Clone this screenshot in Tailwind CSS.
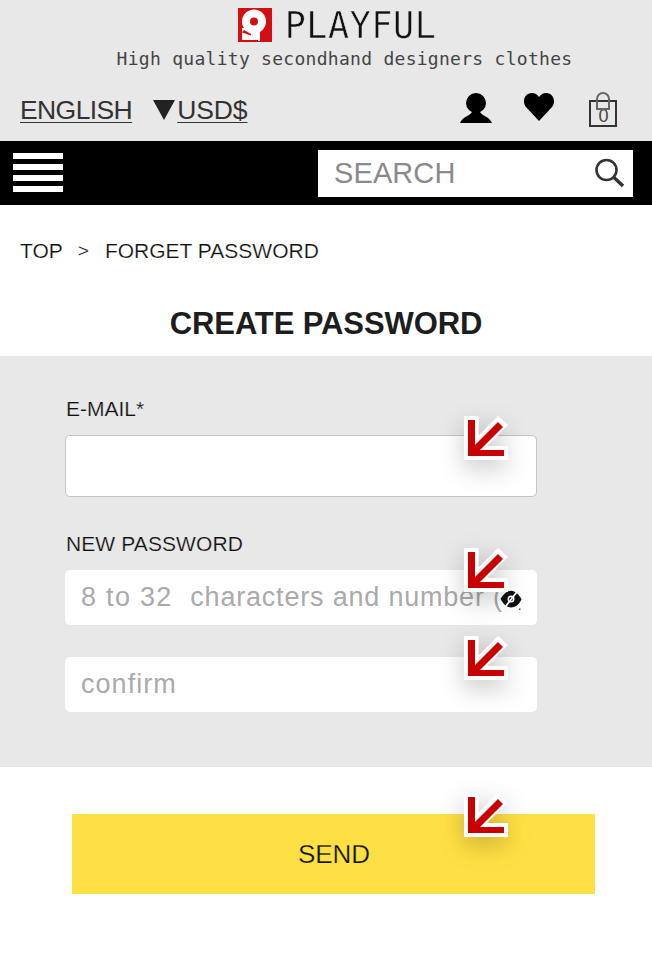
<!DOCTYPE html>
<html lang="en">
<head>
<meta charset="utf-8">
<title>Create password</title>
<script src="https://cdn.jsdelivr.net/npm/@tailwindcss/browser@4"></script>
</head>
<body class="bg-white font-['Liberation_Sans',sans-serif] text-[#222]">
<div class="relative h-[960px] w-[652px] overflow-hidden">
  <svg width="0" height="0" class="absolute">
    <defs>
      <g id="arrow">
        <path d="M0 0H14.5V19.5L34 0L44 9L23 30H44V44H0Z" fill="#fff"/>
        <path d="M4 4H11V29L34 6L39 11L16 34H40V40H4Z" fill="#c80000"/>
      </g>
    </defs>
  </svg>

  <header class="flex h-[141px] flex-col bg-[#e8e8e8]">
    <div class="flex h-[42px] items-center justify-center pt-[8px] pl-[22px]">
      <svg width="34" height="34" viewBox="0 0 34 34" class="shrink-0">
        <rect width="34" height="34" fill="#d40f14"/>
        <circle cx="16" cy="13.5" r="12" fill="#fff"/>
        <path d="M4 20H20V32H4Z" fill="#fff"/>
        <path d="M13 26.5L22 23V33H20V32H13Z" fill="#fff"/>
        <path d="M4 24.5L13 27.5V26L6 22Z" fill="#d40f14"/>
        <circle cx="16" cy="13.5" r="4" fill="#d40f14"/>
      </svg>
      <span class="ml-[13px] font-['DejaVu_Sans_Mono',monospace] text-[35px] leading-none tracking-[0.6px] text-[#111] [-webkit-text-stroke:0.5px_#e8e8e8] [transform:scaleY(1.06)]">PLAYFUL</span>
    </div>
    <p class="mt-[7px] h-[20px] pl-[37px] text-center font-['DejaVu_Sans_Mono',monospace] text-[18px] leading-[20px] tracking-[0.28px] whitespace-nowrap text-[#444]">High quality secondhand designers clothes</p>
    <div class="mt-[16px] flex h-[50px] items-center pl-5">
      <a class="text-[26.5px] leading-none tracking-[-0.6px] text-[#333] underline decoration-1 underline-offset-[3px]">ENGLISH</a>
      <span class="ml-[21px] h-0 w-0 border-x-[11px] border-t-[20px] border-x-transparent border-t-[#222]"></span>
      <a class="ml-[2px] text-[26.5px] leading-none tracking-[-0.1px] text-[#333] underline decoration-1 underline-offset-[3px]">USD$</a>
      <svg width="32" height="32" viewBox="0 0 32 32" class="-mt-[4px] ml-[213px]">
        <circle cx="16" cy="11" r="10"/>
        <path d="M0 31C3 24 10 24 12 20H20C22 24 29 24 32 31Z"/>
      </svg>
      <svg width="32" height="30" viewBox="0 0 32 30" class="-mt-[6px] ml-[31px]">
        <path d="M16 29L3 15C-1 10 1 2 8 1C11 .5 14 2 16 5C18 2 21 .5 24 1C31 2 33 10 29 15Z"/>
      </svg>
      <div class="relative -mt-[2px] ml-[34px] h-[35px] w-[28px]">
        <span class="absolute bottom-0 left-0 flex h-[27px] w-[28px] items-center justify-center border-2 border-[#333] pt-[5px] text-[18px] leading-none text-[#444]">0</span>
        <span class="absolute top-0 left-[7px] h-[18px] w-[14px] rounded-t-[7px] border-2 border-[#666]"></span>
      </div>
    </div>
  </header>

  <nav class="flex h-[64px] items-center justify-between bg-black pr-[19px] pl-[13px]">
    <div class="-mt-[1px] flex w-[50px] flex-col gap-[5.3px]">
      <span class="h-[6px] bg-white"></span>
      <span class="h-[6px] bg-white"></span>
      <span class="h-[6px] bg-white"></span>
      <span class="h-[6px] bg-white"></span>
    </div>
    <div class="flex h-[47px] w-[315px] items-center justify-between bg-white pr-[9px] pl-[16px]">
      <span class="text-[29px] leading-none tracking-[0.1px] text-[#8a8a8a]">SEARCH</span>
      <svg width="30" height="30" viewBox="0 0 30 30" fill="none" stroke="#333">
        <circle cx="12.5" cy="12" r="10" stroke-width="2.6"/>
        <path d="M20 19.5L29 28" stroke-width="3.4"/>
      </svg>
    </div>
  </nav>

  <div class="flex h-[92px] items-center pb-[2px] pl-5 text-[21px] leading-none text-[#111] [-webkit-text-stroke:0.2px_#fff]">
    <span>TOP</span>
    <span class="ml-[15px] text-[19px]">&gt;</span>
    <span class="ml-[16px]">FORGET PASSWORD</span>
  </div>
  <h1 class="flex h-[59px] items-start justify-center pt-[9px] text-[31px] leading-[36px] font-bold tracking-[-0.1px] text-[#1d1d1d]">CREATE PASSWORD</h1>

  <section class="h-[411px] bg-[#e8e8e8] pt-[40px] pl-[65px]">
    <label class="block h-[39px] pl-[1px] text-[21px] leading-[26px] text-[#111] [-webkit-text-stroke:0.2px_#e8e8e8]">E-MAIL*</label>
    <div class="h-[62px] w-[472px] rounded-[5px] border border-[#c4c4c4] bg-white"></div>
    <label class="mt-[33px] block h-[40px] pl-[1px] text-[21px] leading-[28px] tracking-[0.1px] text-[#111] [-webkit-text-stroke:0.2px_#e8e8e8]">NEW PASSWORD</label>
    <div class="relative flex h-[55px] w-[472px] items-center overflow-hidden rounded-[5px] bg-white pl-[16px] text-[27px] tracking-[0.8px] whitespace-nowrap text-[#aaa]">
      <span><span class="tracking-[1.3px]">8 to 32&nbsp; </span>characters and number (</span>
      <svg width="24" height="21" viewBox="0 0 26 24" class="absolute top-[19px] left-[434px]">
        <path d="M1 11C5 5 9 2 13 2C18 2 22 6 25 12C22 18 18 21 13 21C8 21 4 17 1 11Z" fill="#111"/>
        <circle cx="13" cy="11.5" r="4" fill="#fff"/>
        <circle cx="13" cy="11.5" r="2.2" fill="#111"/>
        <path d="M6 21L20 3" stroke="#fff" stroke-width="2"/>
        <circle cx="23" cy="23" r="1" fill="#555"/>
      </svg>
    </div>
    <div class="mt-[32px] flex h-[55px] w-[472px] items-center rounded-[5px] bg-white pl-[16px] text-[27px] tracking-[1.05px] text-[#aaa]">confirm</div>
  </section>

  <div class="pt-[47px] pl-[72px]">
    <button class="flex h-[80px] w-[523px] items-center justify-center bg-[#ffe044] pl-[1px] text-[26px] leading-none text-[#111] [-webkit-text-stroke:0.25px_#ffe044]">SEND</button>
  </div>

  <svg width="44" height="44" viewBox="0 0 44 44" class="absolute top-[416px] left-[464px] drop-shadow-[0_8px_12px_rgba(0,0,0,0.22)]"><use href="#arrow"/></svg>
  <svg width="44" height="44" viewBox="0 0 44 44" class="absolute top-[548px] left-[464px] drop-shadow-[0_8px_12px_rgba(0,0,0,0.22)]"><use href="#arrow"/></svg>
  <svg width="44" height="44" viewBox="0 0 44 44" class="absolute top-[636px] left-[464px] drop-shadow-[0_8px_12px_rgba(0,0,0,0.22)]"><use href="#arrow"/></svg>
  <svg width="44" height="44" viewBox="0 0 44 44" class="absolute top-[793px] left-[464px] drop-shadow-[0_8px_12px_rgba(0,0,0,0.22)]"><use href="#arrow"/></svg>
</div>
</body>
</html>
